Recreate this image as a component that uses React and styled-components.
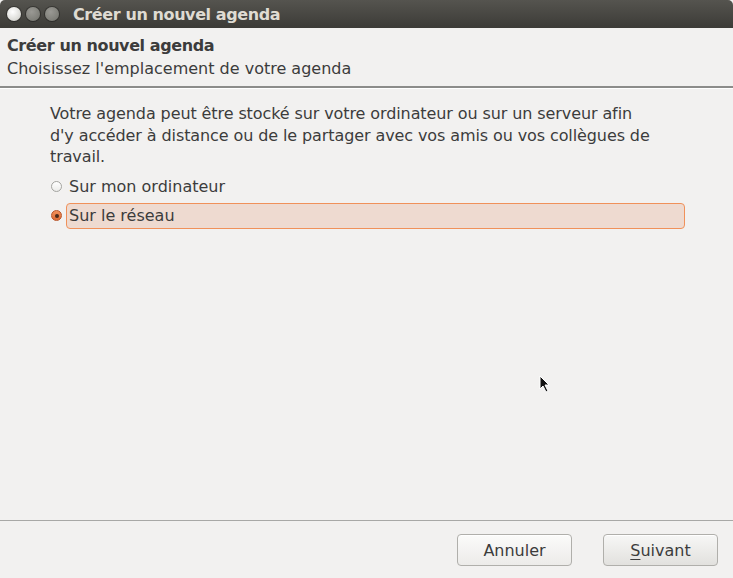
import React from "react";
import styled, { createGlobalStyle } from "styled-components";

const Global = createGlobalStyle`
  html, body {
    margin: 0;
    padding: 0;
    background: #f2f1f0;
  }
  body {
    font-family: "DejaVu Sans", "Noto Sans", sans-serif;
    color: #3c3c3c;
  }
`;

const Window = styled.div`
  position: relative;
  width: 733px;
  height: 578px;
  display: flex;
  flex-direction: column;
  background: #f2f1f0;
  overflow: hidden;
`;

const TitleBar = styled.div`
  height: 28px;
  display: flex;
  align-items: center;
  padding-left: 7px;
  background: linear-gradient(#55544f, #3c3b37);
  border-radius: 5px 5px 0 0;
  box-sizing: border-box;
`;

const Dot = styled.span`
  width: 14px;
  height: 14px;
  border-radius: 50%;
  margin-right: ${p => p.$gap}px;
  background: ${p => p.$light ? "radial-gradient(circle at 40% 35%, #ffffff, #dcdcd8 65%, #b9b8b3)" : "radial-gradient(circle at 40% 35%, #9a9994, #80807a 65%, #6a6964)"};
  box-shadow: 0 0 0 1px rgba(0,0,0,0.3);
`;

const WindowTitle = styled.span`
  margin-left: 14px;
  font-size: 16px;
  font-weight: 700;
  letter-spacing: -0.4px;
  color: #dfdbd2;
`;

const Header = styled.div`
  padding: 7px 7px 0;
  height: 60px;
  box-sizing: border-box;
  border-bottom: 2px solid #8c8c8a;
  box-shadow: 0 1px 0 #ffffff;
`;

const HeadTitle = styled.div`
  font-size: 16px;
  font-weight: 700;
  letter-spacing: -0.4px;
  line-height: 22px;
`;

const HeadSub = styled.div`
  font-size: 16px;
  line-height: 24px;
`;

const Body = styled.div`
  flex: 1;
  padding: 15px 48px 0 50px;
`;

const Intro = styled.p`
  margin: 0 0 6px;
  padding-right: 30px;
  font-size: 16px;
  letter-spacing: -0.1px;
  line-height: 21.5px;
`;

const Option = styled.label`
  display: flex;
  align-items: center;
  height: 26px;
  margin-bottom: 3px;
  font-size: 16px;
`;

const Radio = styled.span`
  width: 11px;
  height: 11px;
  border-radius: 50%;
  box-sizing: border-box;
  margin: 0 4px 0 1px;
  display: flex;
  align-items: center;
  justify-content: center;
  flex-shrink: 0;
  border: 1px solid ${p => p.$on ? "#b8552a" : "#a4a4a0"};
  background: ${p => p.$on ? "linear-gradient(#f2905a, #dd6c35)" : "linear-gradient(#ffffff, #ececea)"};

  &::after {
    content: "";
    display: ${p => p.$on ? "block" : "none"};
    width: 4px;
    height: 4px;
    border-radius: 50%;
    background: #4a2a1a;
  }
`;

const OptionText = styled.span`
  flex: 1;
  height: 100%;
  display: flex;
  align-items: center;
  padding-left: 2px;
  box-sizing: border-box;
  border-radius: 4px;
  border: 1px solid ${p => p.$on ? "#f0915a" : "transparent"};
  background: ${p => p.$on ? "#eedad0" : "transparent"};
`;

const Footer = styled.div`
  height: 58px;
  border-top: 1px solid #a8a8a6;
  display: flex;
  justify-content: flex-end;
  align-items: flex-start;
  gap: 31px;
  padding: 13px 15px 0 0;
  box-sizing: border-box;
`;

const Button = styled.button`
  width: 115px;
  height: 32px;
  font-family: inherit;
  font-size: 16px;
  color: #3c3c3c;
  border: 1px solid #b0afab;
  border-radius: 4px;
  background: ${p => p.$primary ? "linear-gradient(#f7f7f6, #e2e1de)" : "linear-gradient(#fbfbfa, #ecebe9)"};
  box-shadow: inset 0 1px 0 #ffffff;
  padding: 0;

  u {
    text-underline-offset: 3px;
  }
`;

const Pointer = styled.svg`
  position: absolute;
  left: 539px;
  top: 375px;
`;

export default function App() {
  return (
    <>
      <Global />
      <Window>
        <TitleBar>
          <Dot $light $gap={5} />
          <Dot $gap={5} />
          <Dot $gap={0} />
          <WindowTitle>Créer un nouvel agenda</WindowTitle>
        </TitleBar>
        <Header>
          <HeadTitle>Créer un nouvel agenda</HeadTitle>
          <HeadSub>Choisissez l'emplacement de votre agenda</HeadSub>
        </Header>
        <Body>
          <Intro>
            Votre agenda peut être stocké sur votre ordinateur ou sur un serveur afin d'y accéder à distance ou de le partager avec vos amis ou vos collègues de travail.
          </Intro>
          <Option>
            <Radio />
            <OptionText>Sur mon ordinateur</OptionText>
          </Option>
          <Option>
            <Radio $on />
            <OptionText $on>Sur le réseau</OptionText>
          </Option>
        </Body>
        <Footer>
          <Button>Annuler</Button>
          <Button $primary><u>S</u>uivant</Button>
        </Footer>
        <Pointer width="12" height="19" viewBox="0 0 12 19">
          <path d="M1 1 L1 14 L4 11 L7 17 L9 16 L6 10 L10 10 Z" fill="#111" stroke="#fff" strokeWidth="1" />
        </Pointer>
      </Window>
    </>
  );
}
